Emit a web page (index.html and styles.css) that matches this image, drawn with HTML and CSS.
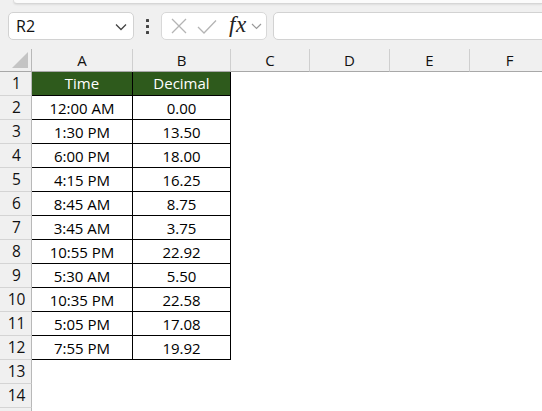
FILE: index.html
```html
<!DOCTYPE html>
<html>
<head>
<meta charset="utf-8">
<link rel="stylesheet" href="styles.css">
</head>
<body>
<div class="app">
  <div class="ribbon-edge"></div>
  <div class="formula-row">
    <div class="namebox">
      <span class="name">R2</span>
      <svg class="chev" width="12" height="8" viewBox="0 0 12 8"><path d="M1 1.5 L6 6.5 L11 1.5" fill="none" stroke="#444" stroke-width="1.3"/></svg>
    </div>
    <div class="dots"><i></i><i></i><i></i></div>
    <div class="fxbox">
      <svg class="ico-x" width="18" height="18" viewBox="0 0 18 18"><path d="M2 2 L16 16 M16 2 L2 16" stroke="#b4b4b4" stroke-width="1.3" fill="none"/></svg>
      <svg class="ico-check" width="20" height="16" viewBox="0 0 20 16"><path d="M1 8 L7 14 L19 1.5" stroke="#b4b4b4" stroke-width="1.3" fill="none"/></svg>
      <span class="fx">fx</span>
      <svg class="chev-sm" width="11" height="7" viewBox="0 0 11 7"><path d="M1 1 L5.5 5.5 L10 1" fill="none" stroke="#999" stroke-width="1.2"/></svg>
    </div>
    <div class="input"></div>
  </div>
  <div class="sheet">
    <div class="corner"><svg width="16" height="16" viewBox="0 0 16 16" class="tri"><path d="M16 0 L16 16 L0 16 Z" fill="#c4c4c4"/></svg></div>
    <div class="colh">A</div><div class="colh">B</div><div class="colh">C</div><div class="colh">D</div><div class="colh">E</div><div class="colh last">F</div>

    <div class="rowh">1</div><div class="hd">Time</div><div class="hd">Decimal</div><div></div><div></div><div></div><div></div>
    <div class="rowh">2</div><div class="td">12:00 AM</div><div class="td">0.00</div><div></div><div></div><div></div><div></div>
    <div class="rowh">3</div><div class="td">1:30 PM</div><div class="td">13.50</div><div></div><div></div><div></div><div></div>
    <div class="rowh">4</div><div class="td">6:00 PM</div><div class="td">18.00</div><div></div><div></div><div></div><div></div>
    <div class="rowh">5</div><div class="td">4:15 PM</div><div class="td">16.25</div><div></div><div></div><div></div><div></div>
    <div class="rowh">6</div><div class="td">8:45 AM</div><div class="td">8.75</div><div></div><div></div><div></div><div></div>
    <div class="rowh">7</div><div class="td">3:45 AM</div><div class="td">3.75</div><div></div><div></div><div></div><div></div>
    <div class="rowh">8</div><div class="td">10:55 PM</div><div class="td">22.92</div><div></div><div></div><div></div><div></div>
    <div class="rowh">9</div><div class="td">5:30 AM</div><div class="td">5.50</div><div></div><div></div><div></div><div></div>
    <div class="rowh">10</div><div class="td">10:35 PM</div><div class="td">22.58</div><div></div><div></div><div></div><div></div>
    <div class="rowh">11</div><div class="td">5:05 PM</div><div class="td">17.08</div><div></div><div></div><div></div><div></div>
    <div class="rowh">12</div><div class="td">7:55 PM</div><div class="td">19.92</div><div></div><div></div><div></div><div></div>
    <div class="rowh">13</div><div></div><div></div><div></div><div></div><div></div><div></div>
    <div class="rowh">14</div><div></div><div></div><div></div><div></div><div></div><div></div>
    <div class="rowh"></div><div></div><div></div><div></div><div></div><div></div><div></div>
  </div>
</div>
</body>
</html>
```
FILE: styles.css
```css
* { box-sizing: border-box; }
html, body {
  margin: 0;
  padding: 0;
  width: 542px;
  height: 411px;
  overflow: hidden;
  background: #f0f0f0;
  font-family: "Open Sans", "Liberation Sans", Arial, sans-serif;
  font-size: 15px;
  color: #000;
}
.app {
  width: 542px;
  height: 411px;
  overflow: hidden;
}
.ribbon-edge {
  height: 4px;
  margin-left: 13px;
  background: #fbfbfb;
  border-bottom: 1px solid #d6d6d6;
  border-bottom-left-radius: 5px;
  border-left: 1px solid #dedede;
  box-shadow: 0 1px 2px rgba(0,0,0,0.08);
}
.formula-row {
  display: flex;
  align-items: center;
  height: 28px;
  margin-top: 8px;
  padding-left: 8px;
}
.formula-row > * { flex: none; }
.namebox {
  width: 126px;
  height: 28px;
  background: #fff;
  border: 1px solid #d2d2d2;
  border-radius: 5px;
  display: flex;
  align-items: center;
  justify-content: space-between;
  padding: 0 6px 0 7px;
}
.name {
  font-size: 16px;
  color: #111;
}
.chev { display: block; margin-top: 1px; }
.dots {
  width: 27px;
  display: flex;
  flex-direction: column;
  align-items: center;
  gap: 3px;
}
.dots i {
  display: block;
  width: 3px;
  height: 3px;
  background: #444;
  border-radius: 0.5px;
}
.fxbox {
  width: 106px;
  height: 28px;
  background: #fff;
  border: 1px solid #d8d8d8;
  border-radius: 5px;
  display: flex;
  align-items: center;
  padding-left: 8px;
}
.ico-x { display: block; margin-right: 9px; }
.ico-check { display: block; margin-right: 12px; margin-top: 1px; }
.fx {
  font-family: "Liberation Serif", "Times New Roman", serif;
  font-style: italic;
  font-size: 23px;
  color: #222;
  line-height: 1;
  margin-right: 4px;
  margin-top: -3px;
  letter-spacing: 0.5px;
}
.chev-sm { display: block; }
.input {
  margin-left: 6px;
  width: 290px;
  height: 28px;
  background: #fff;
  border: 1px solid #d2d2d2;
  border-radius: 5px;
}
.sheet {
  margin-top: 9px;
  display: grid;
  grid-template-columns: 32px 101px 98px 79px 80px 80px 80px;
  grid-template-rows: 23px;
  grid-auto-rows: 24px;
  background: #fff;
  width: 550px;
}
.sheet > div {
  display: flex;
  align-items: center;
  justify-content: center;
  line-height: 1;
}
.corner {
  background: #f0f0f0;
  border-right: 1px solid #b8b8b8;
  border-bottom: 1px solid #a8a8a8;
  justify-content: flex-end !important;
  align-items: flex-end !important;
  padding: 0 3px 3px 0;
}
.tri { display: block; }
.colh {
  background: #f0f0f0;
  border-right: 1px solid #cfcfcf;
  border-bottom: 1px solid #a8a8a8;
  color: #111;
  padding-top: 1px;
}
.rowh {
  background: #f0f0f0;
  border-right: 1px solid #b8b8b8;
  border-bottom: 1px solid #d4d4d4;
  color: #111;
  padding-left: 2px;
  font-size: 15.5px;
}
.hd {
  background: #2e5a1c;
  color: #fff;
  border-right: 1px solid #000;
  border-bottom: 1px solid #000;
}
.td {
  background: #fff;
  color: #000;
  border-right: 1px solid #000;
  border-bottom: 1px solid #000;
  padding-top: 1px;
}
```
